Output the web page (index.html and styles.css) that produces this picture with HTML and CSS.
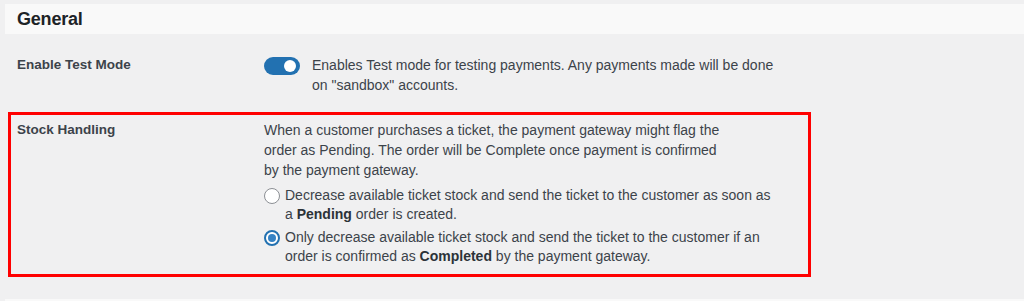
FILE: index.html
```html
<!DOCTYPE html>
<html lang="en">
<head>
<meta charset="utf-8">
<title>General settings</title>
<link rel="stylesheet" href="styles.css">
</head>
<body>
<div class="page">
  <div class="section-head"><h2>General</h2></div>

  <div class="row row-test">
    <div class="label">Enable Test Mode</div>
    <div class="field field-toggle">
      <span class="toggle"><span class="knob"></span></span>
      <p class="desc">Enables Test mode for testing payments. Any payments made will be done<br>on "sandbox" accounts.</p>
    </div>
  </div>

  <div class="row row-stock">
    <div class="label">Stock Handling</div>
    <div class="field">
      <p class="desc">When a customer purchases a ticket, the payment gateway might flag the<br>order as Pending. The order will be Complete once payment is confirmed<br>by the payment gateway.</p>
      <div class="options">
        <label class="option">
          <span class="radio"></span>
          <span class="opt-text">Decrease available ticket stock and send the ticket to the customer as soon as<br>a <b>Pending</b> order is created.</span>
        </label>
        <label class="option">
          <span class="radio checked"></span>
          <span class="opt-text">Only decrease available ticket stock and send the ticket to the customer if an<br>order is confirmed as <b>Completed</b> by the payment gateway.</span>
        </label>
      </div>
    </div>
  </div>

  <div class="section-next"></div>
</div>
</body>
</html>
```

FILE: styles.css
```css
* { box-sizing: border-box; }
html, body {
  margin: 0;
  background: #f0f0f1;
  height: 301px;
  overflow: hidden;
}
body {
  font-family: "Liberation Sans", Arial, sans-serif;
  font-size: 14px;
  line-height: 20px;
  color: #3c434a;
}
.page {
  padding: 4px 0 0 5px;
}
.section-head {
  height: 30px;
  background: #f9f9f9;
  display: flex;
  align-items: center;
  padding-left: 12px;
}
.section-head h2 {
  margin: 0;
  font-size: 18px;
  font-weight: 700;
  color: #1d2327;
  letter-spacing: -0.2px;
}
.row {
  display: flex;
}
.label {
  width: 247px;
  flex: none;
  font-weight: 700;
  font-size: 13.5px;
  color: #3c434a;
}
.row-test {
  padding: 21px 0 0 12px;
  height: 78px;
}
.field-toggle {
  display: flex;
  gap: 12px;
}
.toggle {
  flex: none;
  width: 36px;
  height: 18px;
  margin-top: 2px;
  border-radius: 9px;
  background: #2271b1;
  position: relative;
}
.knob {
  position: absolute;
  top: 3px;
  right: 4px;
  width: 12px;
  height: 12px;
  border-radius: 50%;
  background: #fff;
}
.desc {
  margin: 0;
}
.row-stock {
  margin: 0 213px 0 3px;
  border: 3px solid #ff0000;
  padding: 5px 0 6px 6px;
  height: 165px;
}
.options {
  margin-top: 6px;
  display: flex;
  flex-direction: column;
  gap: 4px;
}
.option {
  display: flex;
  gap: 5px;
  line-height: 19px;
}
.radio {
  flex: none;
  width: 16px;
  height: 16px;
  margin-top: 2px;
  border-radius: 50%;
  border: 1px solid #8c8f94;
  background: #fff;
  position: relative;
}
.radio.checked {
  border: 2px solid #2271b1;
}
.radio.checked::after {
  content: "";
  position: absolute;
  left: 2px;
  top: 2px;
  width: 8px;
  height: 8px;
  border-radius: 50%;
  background: #3582c4;
}
.opt-text b {
  font-weight: 700;
  color: #2c3338;
}
.section-next {
  margin-top: 22px;
  height: 3px;
  background: #f9f9f9;
}
```
